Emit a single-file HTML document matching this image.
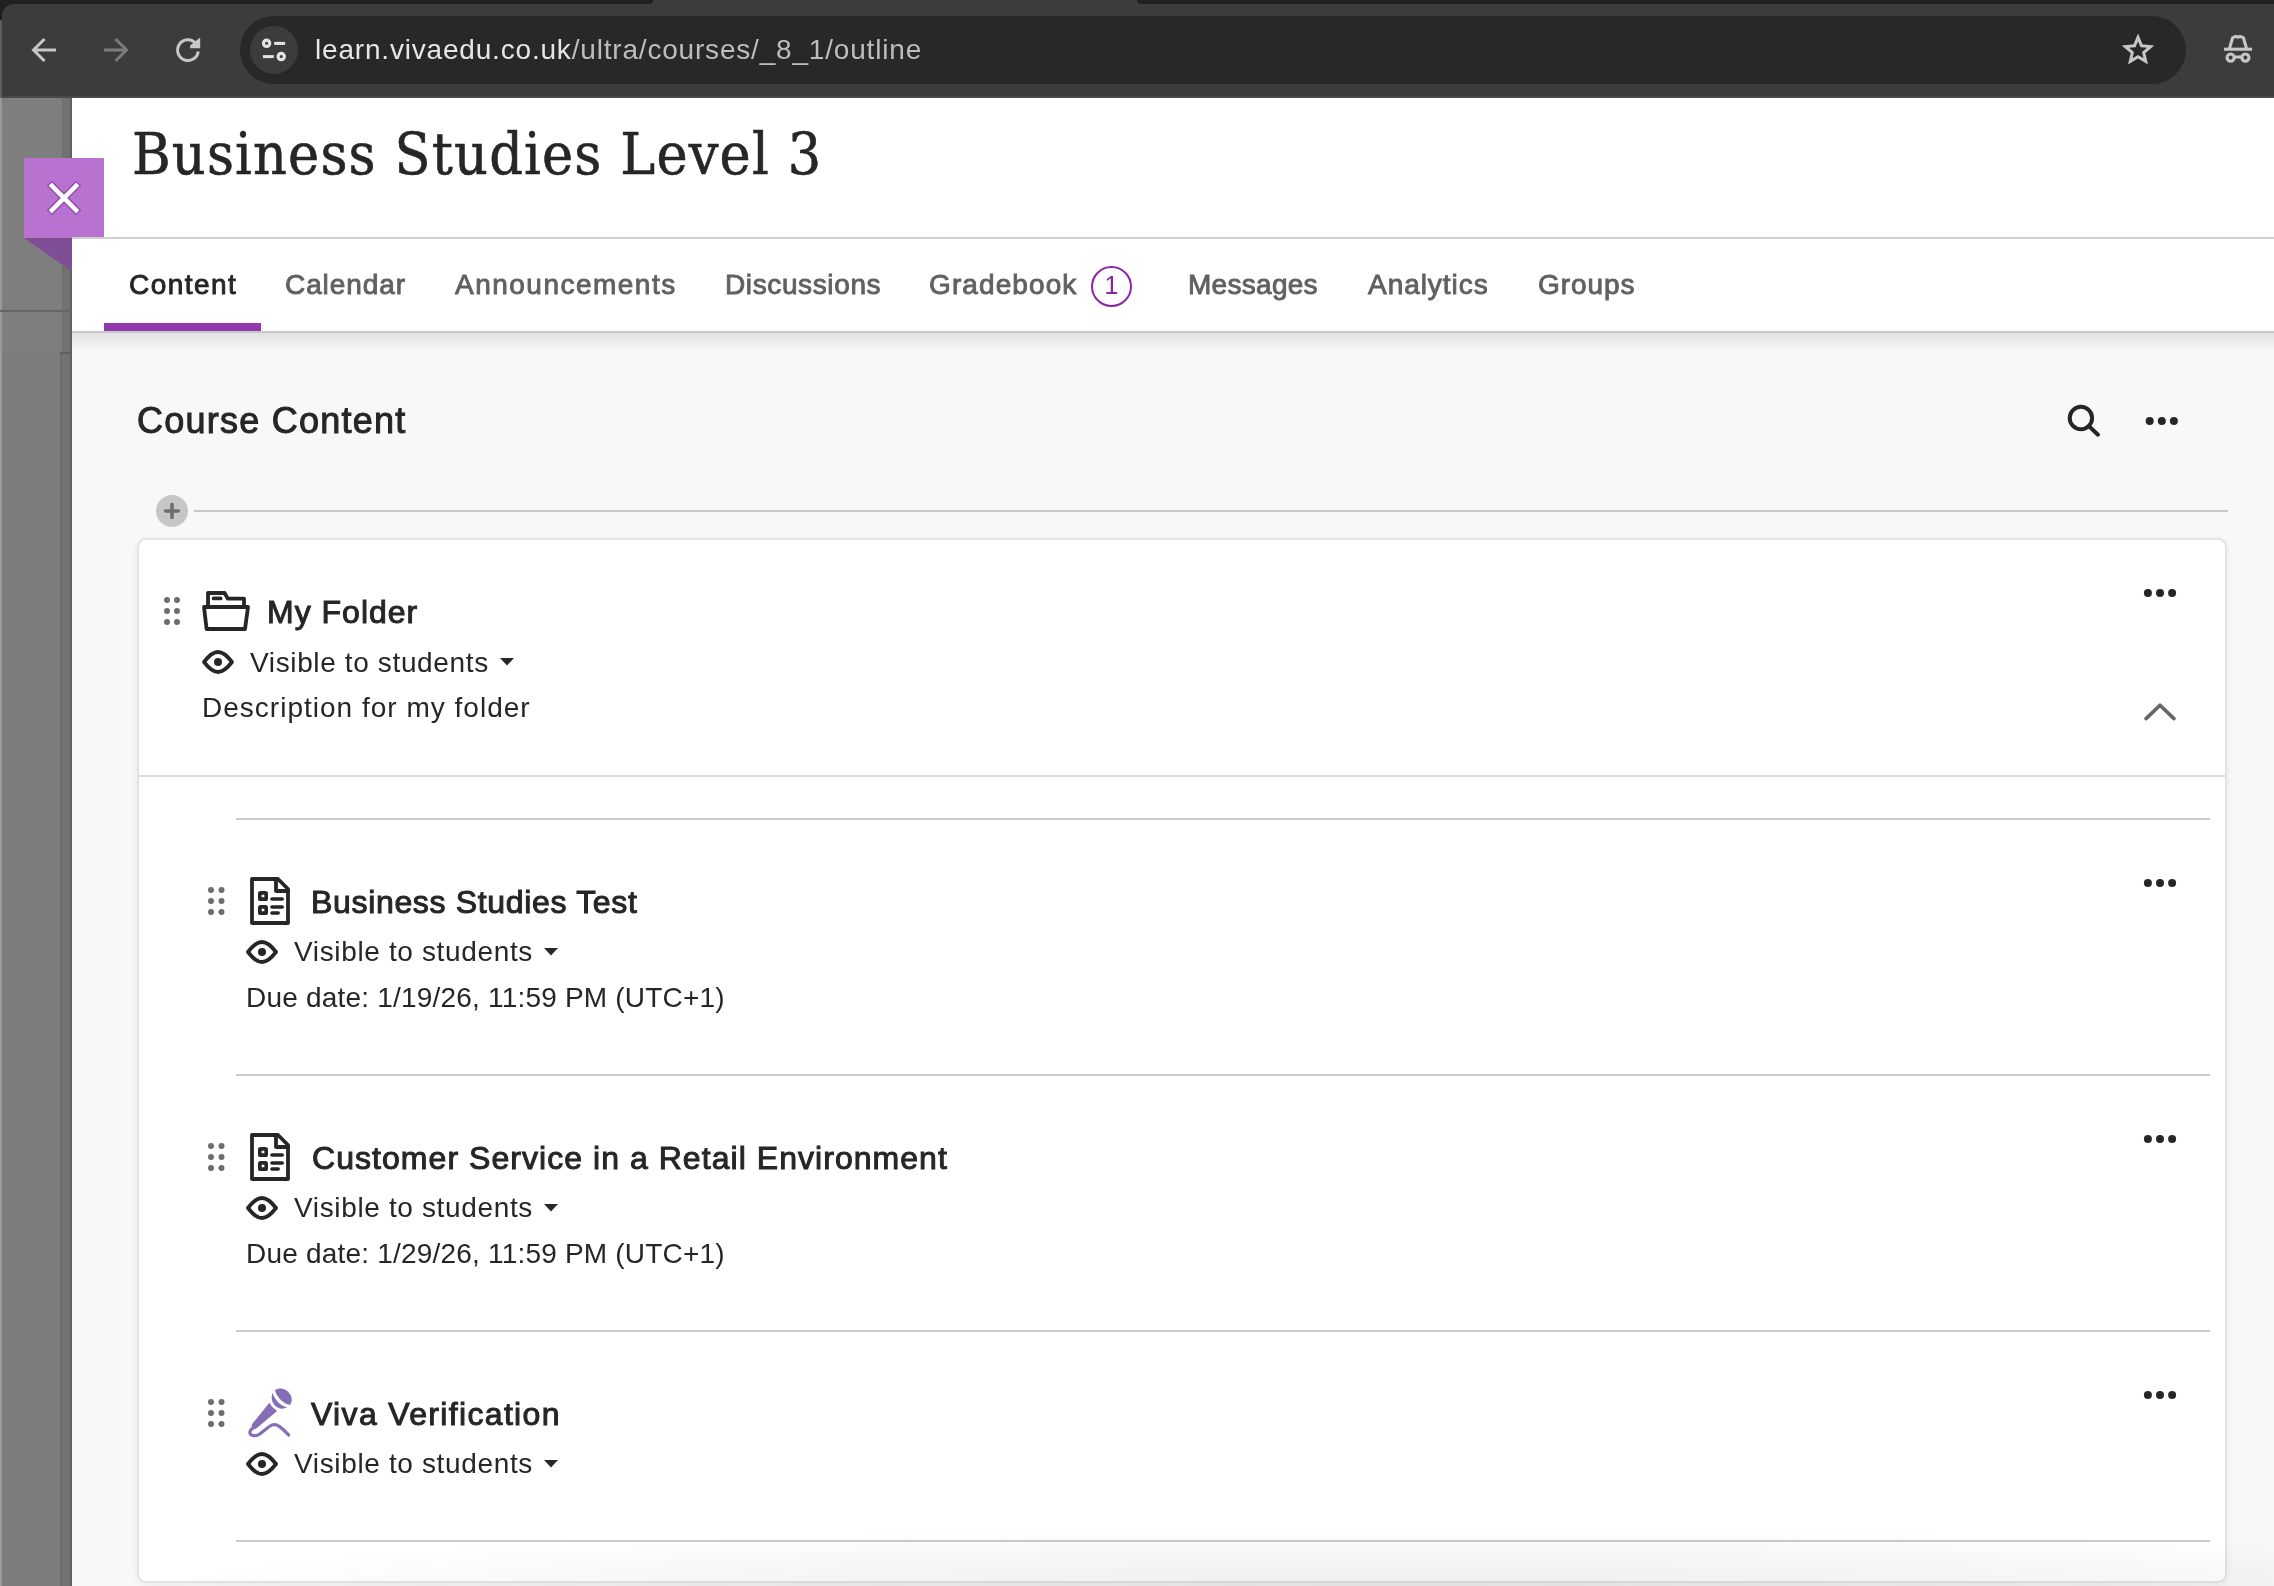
<!DOCTYPE html>
<html lang="en">
<head>
<meta charset="utf-8">
<title>Business Studies Level 3</title>
<style>
*{box-sizing:border-box;margin:0;padding:0}
html,body{width:2274px;height:1586px;overflow:hidden}
body{position:relative;background:#f8f8f8;font-family:"Liberation Sans","DejaVu Sans",sans-serif;color:#262626}
.abs{position:absolute}
.t{position:absolute;white-space:nowrap;line-height:1;will-change:transform}
svg{position:absolute;overflow:visible}

/* ---------- browser chrome ---------- */
#chrome{position:absolute;left:0;top:0;width:2274px;height:98px;background:#3c3c3c}
#chrome .strip{position:absolute;top:0;height:4px;background:#1f2020}
#chrome .edge{position:absolute;left:0;top:0;width:2px;height:98px;background:#5c5c5c}
#omni{position:absolute;left:240px;top:16px;width:1946px;height:68px;border-radius:34px;background:#282828}
#site{position:absolute;left:250px;top:26px;width:48px;height:48px;border-radius:24px;background:#3c3c3c}
#url{left:314.5px;top:35.7px;font-size:28px;color:#e6e6e6;letter-spacing:0.812px}

/* ---------- left rail ---------- */
#rail{position:absolute;left:0;top:98px;width:72px;height:1488px;background:#7e7e7e}

/* ---------- header ---------- */
#head{position:absolute;left:72px;top:98px;width:2202px;height:139px;background:#fff}
#title{left:132.4px;top:124.7px;font-family:"DejaVu Serif Condensed","DejaVu Serif","Liberation Serif",serif;font-stretch:condensed;font-size:58.5px;letter-spacing:1.16px;color:#262626;-webkit-text-stroke:0.6px #262626}
#tabs{position:absolute;left:72px;top:237px;width:2202px;height:96px;background:#fff;border-top:2px solid #d0d0d0;border-bottom:2px solid #c8c8c8}
.tab{font-size:28px;font-weight:400;-webkit-text-stroke:0.9px currentColor;color:#616161}
.sb{font-weight:400;-webkit-text-stroke:1px currentColor}

/* ---------- content ---------- */
#card{position:absolute;left:137px;top:538px;width:2090px;height:1045px;background:#fff;border:2px solid #e3e3e3;border-radius:9px;box-shadow:0 2px 8px rgba(0,0,0,.06)}
.item{position:absolute;left:0;width:2274px;height:0}
.line{position:absolute;height:2px;background:#cacaca}
.h32{font-size:32px;color:#262626}
.r28{font-size:28px;color:#262626}
</style>
</head>
<body>

<!-- ===== browser chrome ===== -->
<div id="chrome">
  <div class="strip" style="left:0;width:653px;border-bottom-right-radius:10px"></div>
  <div class="strip" style="left:1137px;width:1137px;border-bottom-left-radius:10px"></div>
  <div class="abs" style="left:0;top:96px;width:2274px;height:2px;background:#474a49"></div>
  <div class="edge"></div>
  <svg style="left:0;top:0" width="20" height="20" viewBox="0 0 20 20"><path d="M0 0H20V4H14A12 12 0 0 0 2 16V20H0Z" fill="#1f2020"/></svg>
  <!-- back -->
  <svg style="left:30px;top:36px" width="28" height="28" viewBox="0 0 28 28" fill="none" stroke="#c7c7c7" stroke-width="3" stroke-linecap="butt" stroke-linejoin="miter"><path d="M26 14H4.5M14.5 3L3.5 14L14.5 25"/></svg>
  <!-- forward -->
  <svg style="left:102px;top:36px" width="28" height="28" viewBox="0 0 28 28" fill="none" stroke="#7c7c7c" stroke-width="3"><path d="M2 14H23.5M13.5 3L24.5 14L13.5 25"/></svg>
  <!-- reload -->
  <svg style="left:174px;top:36px" width="28" height="28" viewBox="0 0 28 28" fill="none" stroke="#c7c7c7" stroke-width="3"><path d="M24.300 15.500A10.400 10.400 0 1 1 21.600 7"/><path d="M26.200 1.900V12.200H16.100V9.400L25.400 1.900Z" fill="#c7c7c7" stroke="none"/></svg>
  <div id="omni"></div>
  <div id="site"></div>
  <!-- tune icon -->
  <svg style="left:258px;top:34px" width="32" height="32" viewBox="0 0 32 32" fill="none" stroke="#e3e3e3" stroke-width="3.200"><circle cx="8.600" cy="9.300" r="3.150"/><path d="M16.200 9.400H27.100" stroke-width="3"/><circle cx="23.200" cy="22.600" r="3.150"/><path d="M4.900 22.600H15.800" stroke-width="3"/></svg>
  <div class="t" id="url">learn.vivaedu.co.uk<span style="color:#bdbdbd">/ultra/courses/_8_1/outline</span></div>
  <!-- star -->
  <svg style="left:2120px;top:32px" width="36" height="36" viewBox="0 0 36 36" fill="none" stroke="#c7c7c7" stroke-width="3" stroke-linejoin="miter"><path d="M18.000 5.390L21.510 13.760L30.600 14.570L23.670 20.510L25.740 29.330L18.000 24.650L10.260 29.330L12.330 20.510L5.400 14.570L14.490 13.760Z"/></svg>
  <!-- incognito -->
  <svg style="left:2222px;top:33px" width="32" height="32" viewBox="0 0 32 32" fill="none" stroke="#c7c7c7" stroke-width="3.100"><path d="M2 16.2H30"/><path d="M7.5 15.5L10.6 4.6L14 3.4L16 4.2L18 3.4L21.4 4.6L24.5 15.5" stroke-linejoin="round"/><circle cx="8.6" cy="24.6" r="3.6"/><circle cx="23.4" cy="24.6" r="3.6"/><path d="M12.2 24H19.8"/></svg>
</div>

<!-- ===== left rail ===== -->
<div id="rail">
  <div class="abs" style="left:0;top:0;width:2px;height:1489px;background:#9a9a9a"></div>
  <div class="abs" style="left:62px;top:0;width:10px;height:1489px;background:linear-gradient(90deg,#717171 0,#717171 70%,#5c5c5c 100%)"></div>
  <div class="abs" style="left:0;top:212px;width:72px;height:2px;background:#666"></div>
  <div class="abs" style="left:2px;top:254px;width:58px;height:1234px;background:#7c7c7c"></div>
  <div class="abs" style="left:60px;top:254px;width:2px;height:1234px;background:#6c6c6c"></div>
  <div class="abs" style="left:60px;top:254px;width:12px;height:2px;background:#5e5e5e"></div>
</div>

<!-- ===== course header ===== -->
<div id="head"></div>
<div class="t" id="title">Business Studies Level 3</div>

<!-- close flag -->
<svg style="left:24px;top:158px" width="80" height="114" viewBox="0 0 80 114"><path d="M0 80H48V113.5Z" fill="#7f4f95"/><rect x="0" y="0" width="80" height="80" fill="#b873d1"/><path d="M25.300 25.300L54.700 54.700M54.700 25.300L25.300 54.700" stroke="#9440ad" stroke-width="7.200" fill="none"/><path d="M26.200 26.200L53.800 53.800M53.800 26.200L26.200 53.800" stroke="#fff" stroke-width="4.500" fill="none"/></svg>

<!-- ===== tabs ===== -->
<div id="tabs"></div>
<div class="abs" style="left:104px;top:323px;width:157px;height:8px;background:#9338ab"></div>
<div class="t tab" id="tab0" style="left:128.5px;top:271.3px;letter-spacing:1.466px;color:#262626">Content</div>
<div class="t tab" id="tab1" style="left:285.0px;top:271.3px;letter-spacing:0.915px;">Calendar</div>
<div class="t tab" id="tab2" style="left:455.2px;top:271.3px;letter-spacing:1.484px;">Announcements</div>
<div class="t tab" id="tab3" style="left:724.8px;top:271.3px;letter-spacing:0.62px;">Discussions</div>
<div class="t tab" id="tab4" style="left:929.4px;top:271.3px;letter-spacing:1.1px;">Gradebook</div>
<div class="abs" style="left:1091px;top:266px;width:41px;height:41px;border:2.5px solid #8a25a6;border-radius:50%"></div>
<div class="t" style="left:1103px;top:273px;font-size:25px;color:#8a25a6;width:17px;text-align:center">1</div>
<div class="t tab" id="tab5" style="left:1188.2px;top:271.3px;letter-spacing:0.286px;">Messages</div>
<div class="t tab" id="tab6" style="left:1367.8px;top:271.3px;letter-spacing:0.95px;">Analytics</div>
<div class="t tab" id="tab7" style="left:1537.8px;top:271.3px;letter-spacing:0.92px;">Groups</div>
<div class="abs" style="left:72px;top:333px;width:2202px;height:18px;background:linear-gradient(180deg,rgba(0,0,0,.09),rgba(0,0,0,0))"></div>

<!-- ===== course content header ===== -->
<div class="t sb" id="cc" style="left:137.0px;top:403.33px;letter-spacing:1.246px;font-size:36px">Course Content</div>
<svg style="left:2062px;top:400px" width="44" height="44" viewBox="0 0 44 44" fill="none" stroke="#262626" stroke-width="4" stroke-linecap="round"><circle cx="18.9" cy="18" r="11.2"/><path d="M27 26.2L36 34.7"/></svg>
<svg style="left:2140px;top:412px" width="44" height="18" viewBox="0 0 44 18" fill="#262626"><circle cx="9.7" cy="8.9" r="4"/><circle cx="21.8" cy="8.9" r="4"/><circle cx="33.9" cy="8.9" r="4"/></svg>

<!-- add-content divider -->
<div class="line" style="left:194px;top:510px;width:2034px;background:#c9c9c9"></div>
<div class="abs" style="left:156px;top:495px;width:32px;height:32px;border-radius:50%;background:#c6c6c6"></div>
<svg style="left:156px;top:495px" width="32" height="32" viewBox="0 0 32 32" fill="none" stroke="#6e6e6e" stroke-width="3.6" stroke-linecap="round"><path d="M16 9.6V22.4M9.6 16H22.4"/></svg>

<!-- ===== folder card ===== -->
<div id="card"></div>
<div class="line" style="left:139px;top:775px;width:2086px;background:#dedede"></div>

<!-- folder row -->
<svg class="drag" style="left:160px;top:593px" width="24" height="36" viewBox="0 0 24 36" fill="#6d6d6d"><circle cx="7" cy="7" r="3"/><circle cx="17" cy="7" r="3"/><circle cx="7" cy="18" r="3"/><circle cx="17" cy="18" r="3"/><circle cx="7" cy="29" r="3"/><circle cx="17" cy="29" r="3"/></svg>
<svg style="left:200px;top:589px" width="52" height="44" viewBox="0 0 52 44" fill="none" stroke="#262626" stroke-width="3.8" stroke-linejoin="round" stroke-linecap="round"><path d="M8 18V4H24.6L27.8 9.6H44V18"/><path d="M13.600 9.400H20.600" stroke-width="3.700"/><path d="M4 18H48L45 40H6.6Z"/></svg>
<div class="t h32 sb" id="f0" style="left:267.3px;top:595.81px;letter-spacing:1.0px;">My Folder</div>
<svg class="eye" style="left:200px;top:648px" width="36" height="28" viewBox="0 0 36 28"><path d="M4 14C9.5 6.8 13.8 4 18 4C22.2 4 26.500 6.8 32 14C26.500 21.200 22.200 24 18 24C13.800 24 9.500 21.200 4 14Z" fill="none" stroke="#262626" stroke-width="3.8" stroke-linejoin="round"/><circle cx="18" cy="14" r="4" fill="#262626"/></svg>
<div class="t r28" id="v0" style="left:250.2px;top:648.60px;letter-spacing:0.633px;">Visible to students</div>
<svg class="caret" style="left:499px;top:657px" width="16" height="10" viewBox="0 0 16 10"><path d="M1 1H15L8 8.5Z" fill="#262626"/></svg>
<div class="t r28" id="d0" style="left:201.8px;top:693.90px;letter-spacing:1.009px;">Description for my folder</div>
<svg style="left:2140px;top:585px" width="44" height="18" viewBox="0 0 44 18" fill="#262626"><circle cx="7.9" cy="8" r="4"/><circle cx="20" cy="8" r="4"/><circle cx="32.100" cy="8" r="4"/></svg>
<svg style="left:2140px;top:698px" width="40" height="28" viewBox="0 0 40 28" fill="none" stroke="#666" stroke-width="3.6" stroke-linecap="round" stroke-linejoin="round"><path d="M6 20.600L20 7.200L34 20.600"/></svg>

<div class="item" style="top:818px">
  <div class="line" style="left:236px;top:0;width:1974px"></div>
  <svg class="drag" style="left:204px;top:65px" width="24" height="36" viewBox="0 0 24 36" fill="#6d6d6d"><circle cx="7" cy="7" r="3"/><circle cx="17.500" cy="7" r="3"/><circle cx="7" cy="18" r="3"/><circle cx="17.500" cy="18" r="3"/><circle cx="7" cy="29" r="3"/><circle cx="17.500" cy="29" r="3"/></svg>
  <svg style="left:248px;top:57px" width="44" height="52" viewBox="0 0 44 52" fill="none" stroke="#262626" stroke-width="3.8" stroke-linejoin="round" stroke-linecap="round"><path d="M4 4H30L40 14V48H4Z"/><path d="M28 4V16H40"/><rect x="11.825" y="17.825" width="6.350" height="6.350" rx="0.800" stroke-width="3.650"/><rect x="11.825" y="31.825" width="6.350" height="6.350" rx="0.800" stroke-width="3.650"/><path d="M24 24H34.200M24 32H34.200M24 38H30.200" stroke-width="3.600"/></svg>
  <div class="t h32 sb" id="i1t" style="left:310.8px;top:67.91px;letter-spacing:0.67px;">Business Studies Test</div>
  <svg class="eye" style="left:244px;top:120px" width="36" height="28" viewBox="0 0 36 28"><path d="M4 14C9.500 6.800 13.800 4 18 4C22.200 4 26.500 6.800 32 14C26.500 21.200 22.200 24 18 24C13.800 24 9.500 21.200 4 14Z" fill="none" stroke="#262626" stroke-width="3.800" stroke-linejoin="round"/><circle cx="18" cy="14" r="4" fill="#262626"/></svg>
  <div class="t r28" id="i1v" style="left:294.2px;top:120.40px;letter-spacing:0.643px;">Visible to students</div>
  <svg class="caret" style="left:543px;top:129px" width="16" height="10" viewBox="0 0 16 10"><path d="M1 1H15L8 8.500Z" fill="#262626"/></svg>
  <div class="t r28" id="i1d" style="left:245.8px;top:165.6px;letter-spacing:0.2px;">Due date: 1/19/26, 11:59 PM (UTC+1)</div>
  <svg style="left:2140px;top:57px" width="44" height="18" viewBox="0 0 44 18" fill="#262626"><circle cx="7.900" cy="8" r="4"/><circle cx="20" cy="8" r="4"/><circle cx="32.100" cy="8" r="4"/></svg>
</div>
<div class="item" style="top:1074px">
  <div class="line" style="left:236px;top:0;width:1974px"></div>
  <svg class="drag" style="left:204px;top:65px" width="24" height="36" viewBox="0 0 24 36" fill="#6d6d6d"><circle cx="7" cy="7" r="3"/><circle cx="17.500" cy="7" r="3"/><circle cx="7" cy="18" r="3"/><circle cx="17.500" cy="18" r="3"/><circle cx="7" cy="29" r="3"/><circle cx="17.500" cy="29" r="3"/></svg>
  <svg style="left:248px;top:57px" width="44" height="52" viewBox="0 0 44 52" fill="none" stroke="#262626" stroke-width="3.8" stroke-linejoin="round" stroke-linecap="round"><path d="M4 4H30L40 14V48H4Z"/><path d="M28 4V16H40"/><rect x="11.825" y="17.825" width="6.350" height="6.350" rx="0.800" stroke-width="3.650"/><rect x="11.825" y="31.825" width="6.350" height="6.350" rx="0.800" stroke-width="3.650"/><path d="M24 24H34.200M24 32H34.200M24 38H30.200" stroke-width="3.600"/></svg>
  <div class="t h32 sb" id="i2t" style="left:311.6px;top:67.91px;letter-spacing:1.047px;">Customer Service in a Retail Environment</div>
  <svg class="eye" style="left:244px;top:120px" width="36" height="28" viewBox="0 0 36 28"><path d="M4 14C9.500 6.800 13.800 4 18 4C22.200 4 26.500 6.800 32 14C26.500 21.200 22.200 24 18 24C13.800 24 9.500 21.200 4 14Z" fill="none" stroke="#262626" stroke-width="3.800" stroke-linejoin="round"/><circle cx="18" cy="14" r="4" fill="#262626"/></svg>
  <div class="t r28" id="i2v" style="left:294.2px;top:120.40px;letter-spacing:0.643px;">Visible to students</div>
  <svg class="caret" style="left:543px;top:129px" width="16" height="10" viewBox="0 0 16 10"><path d="M1 1H15L8 8.500Z" fill="#262626"/></svg>
  <div class="t r28" id="i2d" style="left:245.8px;top:165.6px;letter-spacing:0.2px;">Due date: 1/29/26, 11:59 PM (UTC+1)</div>
  <svg style="left:2140px;top:57px" width="44" height="18" viewBox="0 0 44 18" fill="#262626"><circle cx="7.900" cy="8" r="4"/><circle cx="20" cy="8" r="4"/><circle cx="32.100" cy="8" r="4"/></svg>
</div>
<div class="item" style="top:1330px">
  <div class="line" style="left:236px;top:0;width:1974px"></div>
  <svg class="drag" style="left:204px;top:65px" width="24" height="36" viewBox="0 0 24 36" fill="#6d6d6d"><circle cx="7" cy="7" r="3"/><circle cx="17.500" cy="7" r="3"/><circle cx="7" cy="18" r="3"/><circle cx="17.500" cy="18" r="3"/><circle cx="7" cy="29" r="3"/><circle cx="17.500" cy="29" r="3"/></svg>
  <svg style="left:246px;top:57px" width="48" height="52" viewBox="246 1387 48 52"><g fill="#866db7"><path d="M275.060 1390.180C279 1387.200 286 1388.600 289.600 1393.500C292.300 1397.200 292.300 1401.500 290.240 1404.830C284.500 1404.400 276.500 1397.500 275.060 1390.180Z"/><path d="M272.590 1393C270.300 1398.500 272.500 1404.500 277.500 1407.500C280.500 1409.200 284.500 1409 287.240 1407.300C281.500 1406.500 275 1400.500 272.590 1393Z"/><path d="M269.410 1402.710Q272 1408 277.180 1411L256 1428.830Q253 1429.500 251.590 1426L251.940 1424.240Z"/></g><path d="M253.200 1427.800C250.600 1429.400 249.300 1432 250.200 1433.800C251.500 1436.200 255.500 1436.300 259.200 1434.300C263 1432 267 1428 270.100 1426C273 1424.200 276.600 1424.600 279.200 1426.400C283 1429 286.200 1432.200 288.650 1435" fill="none" stroke="#866db7" stroke-width="3.200" stroke-linecap="round"/></svg>
  <div class="t h32 sb" id="i3t" style="left:310.8px;top:67.71px;letter-spacing:1.338px;">Viva Verification</div>
  <svg class="eye" style="left:244px;top:120px" width="36" height="28" viewBox="0 0 36 28"><path d="M4 14C9.500 6.800 13.800 4 18 4C22.200 4 26.500 6.800 32 14C26.500 21.200 22.200 24 18 24C13.800 24 9.500 21.200 4 14Z" fill="none" stroke="#262626" stroke-width="3.800" stroke-linejoin="round"/><circle cx="18" cy="14" r="4" fill="#262626"/></svg>
  <div class="t r28" id="i3v" style="left:294.2px;top:120.40px;letter-spacing:0.643px;">Visible to students</div>
  <svg class="caret" style="left:543px;top:129px" width="16" height="10" viewBox="0 0 16 10"><path d="M1 1H15L8 8.500Z" fill="#262626"/></svg>
  <svg style="left:2140px;top:57px" width="44" height="18" viewBox="0 0 44 18" fill="#262626"><circle cx="7.900" cy="8" r="4"/><circle cx="20" cy="8" r="4"/><circle cx="32.100" cy="8" r="4"/></svg>
</div>
<div class="line" style="left:236px;top:1540px;width:1974px"></div>

<div class="abs" style="left:72px;top:1526px;width:2202px;height:60px;background:radial-gradient(ellipse 1250px 60px at 1330px 100%,rgba(0,0,0,.065),rgba(0,0,0,.03) 60%,rgba(0,0,0,0) 100%);pointer-events:none"></div>
</body>
</html>
